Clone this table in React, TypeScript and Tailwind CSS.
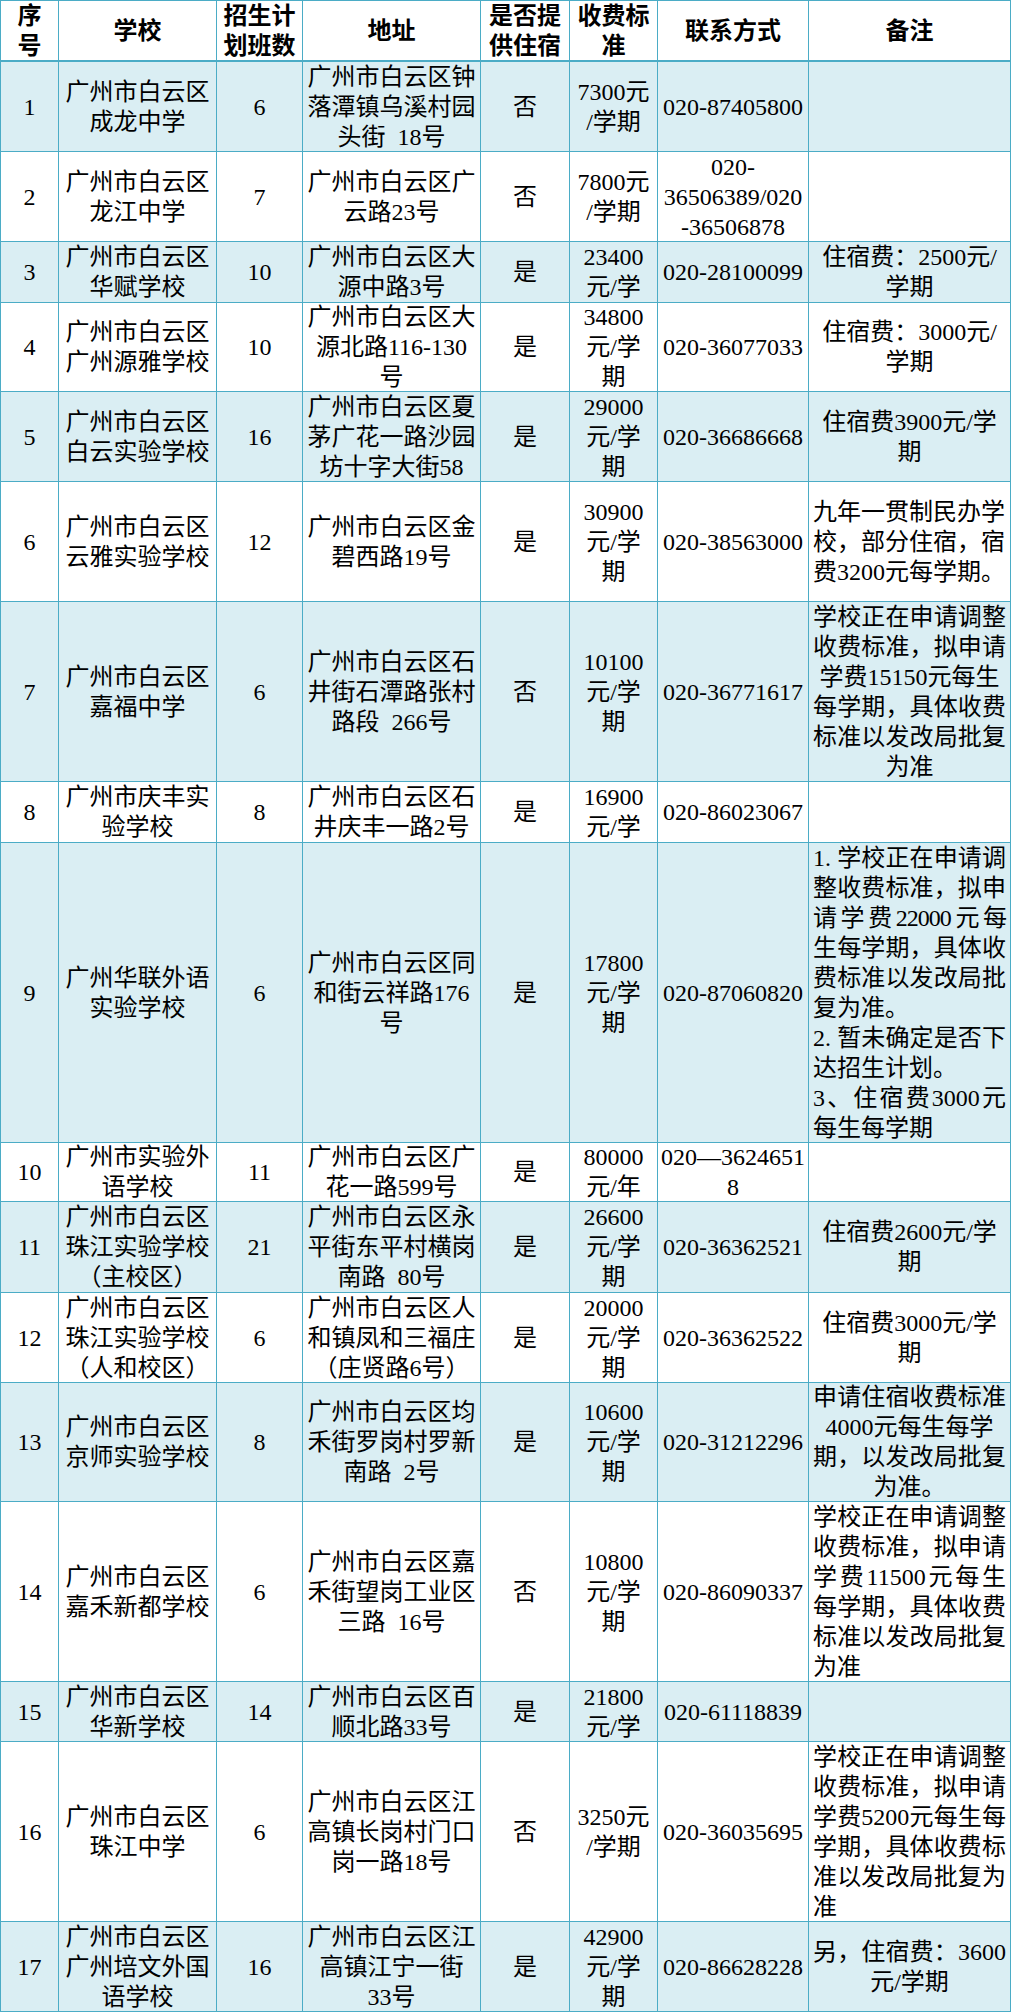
import React from "react";

type Line = string | { t: string; j?: boolean; cls?: string };

type Note = { align: "center" | "left"; lines: Line[] };

type Row = {
  h: string;
  no: string;
  school: string[];
  classes: string;
  addr: string[];
  board: string;
  fee: string[];
  contact: string[];
  note?: Note;
};

const S = "\u2002";

const rows: Row[] = [
  {
    h: "h-[90px]",
    no: "1",
    school: ["广州市白云区", "成龙中学"],
    classes: "6",
    addr: ["广州市白云区钟", "落潭镇乌溪村园", `头街${S}18号`],
    board: "否",
    fee: ["7300元", "/学期"],
    contact: ["020-87405800"],
  },
  {
    h: "h-[90px]",
    no: "2",
    school: ["广州市白云区", "龙江中学"],
    classes: "7",
    addr: ["广州市白云区广", "云路23号"],
    board: "否",
    fee: ["7800元", "/学期"],
    contact: ["020-", "36506389/020", "-36506878"],
  },
  {
    h: "h-[61px]",
    no: "3",
    school: ["广州市白云区", "华赋学校"],
    classes: "10",
    addr: ["广州市白云区大", "源中路3号"],
    board: "是",
    fee: ["23400", "元/学"],
    contact: ["020-28100099"],
    note: { align: "center", lines: ["住宿费：2500元/", "学期"] },
  },
  {
    h: "h-[89px]",
    no: "4",
    school: ["广州市白云区", "广州源雅学校"],
    classes: "10",
    addr: ["广州市白云区大", "源北路116-130", "号"],
    board: "是",
    fee: ["34800", "元/学", "期"],
    contact: ["020-36077033"],
    note: { align: "center", lines: ["住宿费：3000元/", "学期"] },
  },
  {
    h: "h-[90px]",
    no: "5",
    school: ["广州市白云区", "白云实验学校"],
    classes: "16",
    addr: ["广州市白云区夏", "茅广花一路沙园", "坊十字大街58"],
    board: "是",
    fee: ["29000", "元/学", "期"],
    contact: ["020-36686668"],
    note: { align: "center", lines: ["住宿费3900元/学", "期"] },
  },
  {
    h: "h-[120px]",
    no: "6",
    school: ["广州市白云区", "云雅实验学校"],
    classes: "12",
    addr: ["广州市白云区金", "碧西路19号"],
    board: "是",
    fee: ["30900", "元/学", "期"],
    contact: ["020-38563000"],
    note: {
      align: "left",
      lines: ["九年一贯制民办学", "校，部分住宿，宿", "费3200元每学期。"],
    },
  },
  {
    h: "h-[180px]",
    no: "7",
    school: ["广州市白云区", "嘉福中学"],
    classes: "6",
    addr: ["广州市白云区石", "井街石潭路张村", `路段${S}266号`],
    board: "否",
    fee: ["10100", "元/学", "期"],
    contact: ["020-36771617"],
    note: {
      align: "center",
      lines: [
        { t: "学校正在申请调整", j: true },
        { t: "收费标准，拟申请", j: true },
        "学费15150元每生",
        { t: "每学期，具体收费", j: true },
        { t: "标准以发改局批复", j: true },
        "为准",
      ],
    },
  },
  {
    h: "h-[61px]",
    no: "8",
    school: ["广州市庆丰实", "验学校"],
    classes: "8",
    addr: ["广州市白云区石", "井庆丰一路2号"],
    board: "是",
    fee: ["16900", "元/学"],
    contact: ["020-86023067"],
  },
  {
    h: "h-[300px]",
    no: "9",
    school: ["广州华联外语", "实验学校"],
    classes: "6",
    addr: ["广州市白云区同", "和街云祥路176", "号"],
    board: "是",
    fee: ["17800", "元/学", "期"],
    contact: ["020-87060820"],
    note: {
      align: "left",
      lines: [
        { t: "1. 学校正在申请调", j: true },
        { t: "整收费标准，拟申", j: true },
        { t: "请学费22000元每", j: true, cls: "tracking-[-1px]" },
        { t: "生每学期，具体收", j: true },
        { t: "费标准以发改局批", j: true },
        "复为准。",
        { t: "2. 暂未确定是否下", j: true },
        "达招生计划。",
        { t: "3、住宿费3000元", j: true },
        "每生每学期",
      ],
    },
  },
  {
    h: "h-[59px]",
    no: "10",
    school: ["广州市实验外", "语学校"],
    classes: "11",
    addr: ["广州市白云区广", "花一路599号"],
    board: "是",
    fee: ["80000", "元/年"],
    contact: ["020—3624651", "8"],
  },
  {
    h: "h-[91px]",
    no: "11",
    school: ["广州市白云区", "珠江实验学校", "（主校区）"],
    classes: "21",
    addr: ["广州市白云区永", "平街东平村横岗", `南路${S}80号`],
    board: "是",
    fee: ["26600", "元/学", "期"],
    contact: ["020-36362521"],
    note: { align: "center", lines: ["住宿费2600元/学", "期"] },
  },
  {
    h: "h-[90px]",
    no: "12",
    school: ["广州市白云区", "珠江实验学校", "（人和校区）"],
    classes: "6",
    addr: ["广州市白云区人", "和镇凤和三福庄", "（庄贤路6号）"],
    board: "是",
    fee: ["20000", "元/学", "期"],
    contact: ["020-36362522"],
    note: { align: "center", lines: ["住宿费3000元/学", "期"] },
  },
  {
    h: "h-[119px]",
    no: "13",
    school: ["广州市白云区", "京师实验学校"],
    classes: "8",
    addr: ["广州市白云区均", "禾街罗岗村罗新", `南路${S}2号`],
    board: "是",
    fee: ["10600", "元/学", "期"],
    contact: ["020-31212296"],
    note: {
      align: "center",
      lines: [
        { t: "申请住宿收费标准", j: true },
        "4000元每生每学",
        { t: "期，以发改局批复", j: true },
        "为准。",
      ],
    },
  },
  {
    h: "h-[180px]",
    no: "14",
    school: ["广州市白云区", "嘉禾新都学校"],
    classes: "6",
    addr: ["广州市白云区嘉", "禾街望岗工业区", `三路${S}16号`],
    board: "否",
    fee: ["10800", "元/学", "期"],
    contact: ["020-86090337"],
    note: {
      align: "left",
      lines: [
        { t: "学校正在申请调整", j: true },
        { t: "收费标准，拟申请", j: true },
        { t: "学费11500元每生", j: true },
        { t: "每学期，具体收费", j: true },
        { t: "标准以发改局批复", j: true },
        "为准",
      ],
    },
  },
  {
    h: "h-[60px]",
    no: "15",
    school: ["广州市白云区", "华新学校"],
    classes: "14",
    addr: ["广州市白云区百", "顺北路33号"],
    board: "是",
    fee: ["21800", "元/学"],
    contact: ["020-61118839"],
  },
  {
    h: "h-[180px]",
    no: "16",
    school: ["广州市白云区", "珠江中学"],
    classes: "6",
    addr: ["广州市白云区江", "高镇长岗村门口", "岗一路18号"],
    board: "否",
    fee: ["3250元", "/学期"],
    contact: ["020-36035695"],
    note: {
      align: "left",
      lines: [
        { t: "学校正在申请调整", j: true },
        { t: "收费标准，拟申请", j: true },
        { t: "学费5200元每生每", j: true },
        { t: "学期，具体收费标", j: true },
        { t: "准以发改局批复为", j: true },
        "准",
      ],
    },
  },
  {
    h: "h-[90px]",
    no: "17",
    school: ["广州市白云区", "广州培文外国", "语学校"],
    classes: "16",
    addr: ["广州市白云区江", "高镇江宁一街", "33号"],
    board: "是",
    fee: ["42900", "元/学", "期"],
    contact: ["020-86628228"],
    note: { align: "center", lines: [{ t: "另，住宿费：3600", j: true }, "元/学期"] },
  },
];

const cell =
  "border-r border-b border-[#4bacc6] flex flex-col justify-center overflow-hidden";

function Cell({ lines, className = "" }: { lines: string[]; className?: string }) {
  return (
    <div className={`${cell} items-center text-center ${className}`}>
      {lines.map((l, i) => (
        <div key={i} className="whitespace-nowrap">
          {l}
        </div>
      ))}
    </div>
  );
}

function NoteCell({ note }: { note?: Note }) {
  return (
    <div
      className={`${cell} px-[4px] ${
        note?.align === "left" ? "items-start text-left" : "items-center text-center"
      }`}
    >
      {note?.lines.map((l, i) => {
        const line = typeof l === "string" ? { t: l } : l;
        return (
          <div
            key={i}
            className={`whitespace-nowrap ${
              line.j ? "w-full text-justify [text-align-last:justify]" : ""
            } ${line.cls ?? ""}`}
          >
            {line.t}
          </div>
        );
      })}
    </div>
  );
}

const grid = "grid grid-cols-[58px_158px_86px_178px_89px_88px_151px_202px]";

export default function App() {
  return (
    <div className="w-[1011px] bg-white font-['Liberation_Serif','Noto_Sans_CJK_SC',serif] text-[24px] leading-[30px] text-black">
      <div className="border-l border-t border-[#4bacc6]">
        <div className={`${grid} h-[61px] font-bold [&>div]:border-b-2`}>
          <Cell lines={["序", "号"]} />
          <Cell lines={["学校"]} />
          <Cell lines={["招生计", "划班数"]} />
          <Cell lines={["地址"]} />
          <Cell lines={["是否提", "供住宿"]} />
          <Cell lines={["收费标", "准"]} />
          <Cell lines={["联系方式"]} />
          <Cell lines={["备注"]} />
        </div>
        {rows.map((r, i) => (
          <div
            key={r.no}
            className={`${grid} ${r.h} ${i % 2 === 0 ? "bg-[#daeef3]" : "bg-white"}`}
          >
            <Cell lines={[r.no]} />
            <Cell lines={r.school} />
            <Cell lines={[r.classes]} />
            <Cell lines={r.addr} />
            <Cell lines={[r.board]} />
            <Cell lines={r.fee} />
            <Cell lines={r.contact} />
            <NoteCell note={r.note} />
          </div>
        ))}
      </div>
    </div>
  );
}
